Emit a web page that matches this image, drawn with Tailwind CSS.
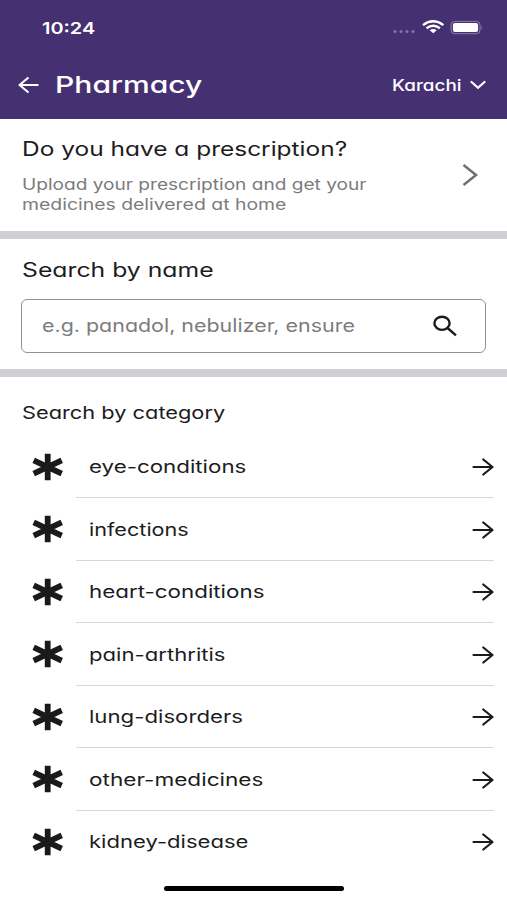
<!DOCTYPE html>
<html lang="en">
<head>
<meta charset="utf-8">
<title>Pharmacy</title>
<script src="https://cdn.jsdelivr.net/npm/@tailwindcss/browser@4"></script>
</head>
<body class="relative flex flex-col w-[507px] h-[900px] overflow-hidden bg-white font-[Inter,sans-serif] [font-feature-settings:'cv11'] text-[#1c1c1e] whitespace-nowrap">
<svg class="hidden">
  <symbol id="asterisk" viewBox="0 0 32 28"><path d="M15.700 .7v26.600M1.700 7.400l28 13.200M1.700 20.600L29.700 7.400" fill="none" stroke="#1a1a18" stroke-width="5.800"/></symbol>
  <symbol id="arrow" viewBox="0 0 22 18"><path d="M1.500 9h18.800M11.300 1.500L20.500 9L11.300 16.500" fill="none" stroke="#1a1a1a" stroke-width="2.200" stroke-linecap="round" stroke-linejoin="round"/></symbol>
</svg>

<header class="h-[119px] shrink-0 bg-[#453072] text-white">
  <div class="flex h-[55px] items-center justify-between pl-[42px] pr-[24px]">
    <span class="origin-left scale-x-[1.205] text-[16.5px] leading-6 font-semibold">10:24</span>
    <svg class="h-4 w-[92px]" viewBox="0 0 92 16">
      <g fill="#8373a4"><circle cx="4" cy="11.500" r="1.600"/><circle cx="10" cy="11.500" r="1.600"/><circle cx="16" cy="11.500" r="1.600"/><circle cx="22" cy="11.500" r="1.600"/></g>
      <g fill="none" stroke="#fff" stroke-width="2.400"><path d="M32 5.100Q42.200-2.400 52.400 5.100"/><path d="M35.500 8.300Q42.200 3.400 48.900 8.300"/></g>
      <path d="M38.700 10.200Q42.200 7.800 45.700 10.200L42.200 13.200Z" fill="#fff"/>
      <rect x="60" y="1.400" width="29" height="12.300" rx="3.600" fill="none" stroke="#8e80ab"/>
      <rect x="61.900" y="3.100" width="25.200" height="8.900" rx="2" fill="#fff"/>
      <path d="M90.400 5.800v3.600Q92 7.600 90.400 5.800Z" fill="#a092ba"/>
    </svg>
  </div>
  <div class="flex h-[60px] items-center pl-[18px] pr-[21px]">
    <svg class="h-[18px] w-[22px]" viewBox="0 0 22 18"><path d="M20.500 9H1.500M10.500 1.500L1.500 9l9 7.500" fill="none" stroke="#fff" stroke-width="2.100" stroke-linejoin="round"/></svg>
    <h1 class="ml-[15px] origin-left scale-x-[1.28] text-[23.5px] leading-8 font-medium">Pharmacy</h1>
    <span class="ml-auto w-[78px] origin-left text-[16px] leading-6 font-medium"><span class="inline-block origin-left scale-x-[1.18]">Karachi</span></span>
    <svg class="h-[10px] w-4" viewBox="0 0 16 10"><path d="M1.500 2L8 7.800l6.500-5.800" fill="none" stroke="#fff" stroke-width="2.200" stroke-linecap="round"/></svg>
  </div>
</header>

<section class="flex h-[112px] shrink-0 items-center pl-[22px] pr-[29px]">
  <div class="h-full flex-1 pt-[17px]">
    <h2 class="w-fit origin-left scale-x-[1.223] text-[20px] leading-[27px]">Do you have a prescription?</h2>
    <p class="mt-[11px] w-fit origin-left scale-x-[1.193] text-[16px] leading-5 text-[#7c7c7c]">Upload your prescription and get your</p>
    <p class="w-fit origin-left scale-x-[1.213] text-[16px] leading-5 text-[#7c7c7c]">medicines delivered at home</p>
  </div>
  <svg class="h-[22px] w-4" viewBox="0 0 16 22"><path d="M1.500 1L14 11L1.500 21" fill="none" stroke="#707070" stroke-width="2.500"/></svg>
</section>
<div class="h-2 shrink-0 bg-[#cfced3]"></div>

<section class="h-[130px] shrink-0 px-[21px] pt-[17px]">
  <h2 class="ml-px w-fit origin-left scale-x-[1.27] text-[19.5px] leading-7">Search by name</h2>
  <div class="mt-[15px] flex h-[53.500px] items-center justify-between rounded-[6px] border-[1.5px] border-[#929292] pr-[28px] pl-5">
    <span class="origin-left scale-x-[1.19] text-[18px] leading-6 text-[#7c7c7c]">e.g. panadol, nebulizer, ensure</span>
    <svg class="h-[22px] w-[26px]" viewBox="0 0 26 22"><g fill="none" stroke="#1a1a1a" stroke-width="2.400"><ellipse cx="11" cy="8.300" rx="7.600" ry="6.600"/><path d="M16.500 13L25 20.300"/></g></svg>
  </div>
</section>
<div class="h-2 shrink-0 bg-[#cfced3]"></div>

<section class="pt-[22px]">
  <h2 class="ml-[22px] w-fit origin-left scale-x-[1.245] text-[17.5px] leading-7">Search by category</h2>
  <ul class="mt-[8.500px] pl-8 pr-[13px]">
    <li class="flex h-[62.500px] items-center"><svg class="h-7 w-8"><use href="#asterisk"/></svg><div class="ml-3 flex h-full flex-1 items-center justify-between border-b border-[#d8d8d8] pt-[2px] pl-[13px]"><span class="origin-left scale-x-[1.275] text-[17.5px]">eye-conditions</span><svg class="h-[18px] w-[22px]"><use href="#arrow"/></svg></div></li>
    <li class="flex h-[62.500px] items-center"><svg class="h-7 w-8"><use href="#asterisk"/></svg><div class="ml-3 flex h-full flex-1 items-center justify-between border-b border-[#d8d8d8] pt-[2px] pl-[13px]"><span class="origin-left scale-x-[1.235] text-[17.5px]">infections</span><svg class="h-[18px] w-[22px]"><use href="#arrow"/></svg></div></li>
    <li class="flex h-[62.500px] items-center"><svg class="h-7 w-8"><use href="#asterisk"/></svg><div class="ml-3 flex h-full flex-1 items-center justify-between border-b border-[#d8d8d8] pt-[2px] pl-[13px]"><span class="origin-left scale-x-[1.277] text-[17.5px]">heart-conditions</span><svg class="h-[18px] w-[22px]"><use href="#arrow"/></svg></div></li>
    <li class="flex h-[62.500px] items-center"><svg class="h-7 w-8"><use href="#asterisk"/></svg><div class="ml-3 flex h-full flex-1 items-center justify-between border-b border-[#d8d8d8] pt-[2px] pl-[13px]"><span class="origin-left scale-x-[1.264] text-[17.5px]">pain-arthritis</span><svg class="h-[18px] w-[22px]"><use href="#arrow"/></svg></div></li>
    <li class="flex h-[62.500px] items-center"><svg class="h-7 w-8"><use href="#asterisk"/></svg><div class="ml-3 flex h-full flex-1 items-center justify-between border-b border-[#d8d8d8] pt-[2px] pl-[13px]"><span class="origin-left scale-x-[1.268] text-[17.5px]">lung-disorders</span><svg class="h-[18px] w-[22px]"><use href="#arrow"/></svg></div></li>
    <li class="flex h-[62.500px] items-center"><svg class="h-7 w-8"><use href="#asterisk"/></svg><div class="ml-3 flex h-full flex-1 items-center justify-between border-b border-[#d8d8d8] pt-[2px] pl-[13px]"><span class="origin-left scale-x-[1.29] text-[17.5px]">other-medicines</span><svg class="h-[18px] w-[22px]"><use href="#arrow"/></svg></div></li>
    <li class="flex h-[62.500px] items-center"><svg class="h-7 w-8"><use href="#asterisk"/></svg><div class="ml-3 flex h-full flex-1 items-center justify-between pt-px pl-[13px]"><span class="origin-left scale-x-[1.26] text-[17.5px]">kidney-disease</span><svg class="h-[18px] w-[22px]"><use href="#arrow"/></svg></div></li>
  </ul>
</section>
<div class="absolute bottom-[9px] left-[164px] h-[5px] w-[180px] rounded-full bg-black"></div>
</body>
</html>
